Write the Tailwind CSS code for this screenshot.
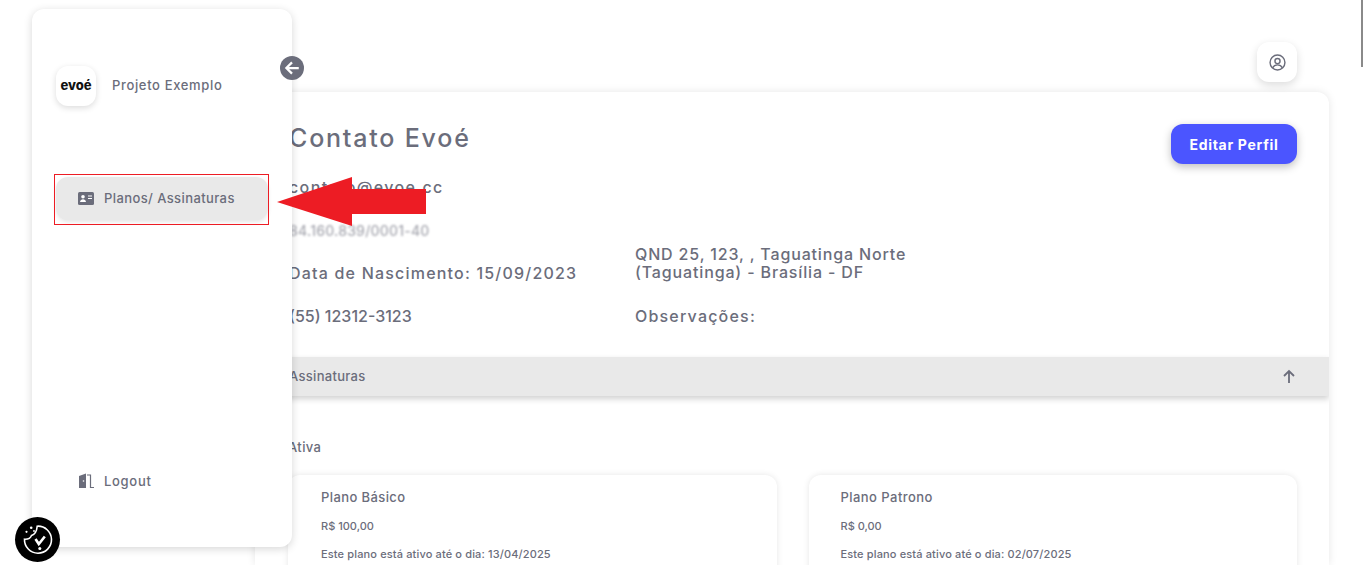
<!DOCTYPE html>
<html lang="pt-BR">
<head>
  <meta charset="UTF-8" />
  <meta name="viewport" content="width=device-width, initial-scale=1.0" />
  <title>Perfil - Evoé</title>
  <script src="https://cdn.jsdelivr.net/npm/@tailwindcss/browser@4"></script>
</head>
<body class="bg-white h-[565px] overflow-hidden relative font-['Inter',sans-serif] font-medium text-[#6b6d7b]">

  <!-- conteudo -->
  <main class="ml-[255px] w-[1074px]">
    <div class="h-[92px] flex justify-end items-start pt-[42px] pr-[32px]">
      <button class="w-10 h-10 bg-white rounded-xl shadow-[0_3px_8px_rgba(0,0,0,0.14)] flex items-center justify-center">
        <svg class="w-[17px] h-[17px]" viewBox="0 0 24 24" fill="none" stroke="#6b6d7b" stroke-width="2">
          <circle cx="12" cy="12" r="10.500" />
          <circle cx="12" cy="10" r="3.600" />
          <path d="M5 19.500c1.500-3 4-4.200 7-4.200s5.500 1.200 7 4.200" />
        </svg>
      </button>
    </div>

    <section class="bg-white rounded-t-xl shadow-[0_0_8px_rgba(0,0,0,0.1)] h-[473px] overflow-hidden">
      <div class="pl-[34px] pr-[32px] h-[265px] relative">
        <div class="flex justify-between pt-[32px]">
          <h1 class="text-[25px] leading-[28px] tracking-[1.8px]">Contato Evoé</h1>
          <button class="w-[126px] h-10 bg-[#4b55ff] rounded-xl text-white font-bold text-[14px] tracking-[0.7px] shadow-[0_3px_8px_rgba(0,0,0,0.25)]">Editar Perfil</button>
        </div>
        <div class="grid grid-cols-[346px_300px] text-[16px] leading-[18px]">
          <div class="mt-[14px]">
            <p class="tracking-[1.370px]">contato@evoe.cc</p>
            <p class="mt-[26px] text-[14px] tracking-[0.2px] blur-[1px] opacity-60 whitespace-nowrap">84.160.839/0001-40</p>
            <p class="mt-[24px] tracking-[1.200px]">Data de Nascimento: 15/09/2023</p>
            <p class="mt-[25px]">(55) 12312-3123</p>
          </div>
          <div class="pt-[81px]">
            <p class="tracking-[0.850px]">QND 25, 123, , Taguatinga Norte (Taguatinga) - Brasília - DF</p>
            <p class="mt-[26px] tracking-[1.200px]">Observações:</p>
          </div>
        </div>
      </div>

      <div class="h-[39px] pt-px bg-[#e9e9e9] shadow-[0_3px_6px_rgba(0,0,0,0.18)] flex items-center justify-between pl-[34px] pr-[32px] relative text-[13px] tracking-[0.3px]">
        <span>Assinaturas</span>
        <svg class="w-4 h-4" viewBox="0 0 16 16" fill="none" stroke="#6b6d7b" stroke-width="1.800">
          <path d="M8 14V2.500M3 7l5-5 5 5" />
        </svg>
      </div>

      <div class="pl-[33px] pr-[32px]">
        <p class="pt-[43px] text-[13px] leading-[16px] tracking-[0.4px]">Ativa</p>
        <div class="grid grid-cols-2 gap-x-[32px] mt-[20px]">
          <article class="h-[120px] rounded-xl shadow-[0_0_6px_rgba(0,0,0,0.1)] pl-[33px] pt-[14px]">
            <h2 class="text-[13px] leading-[16px] tracking-[0.4px]">Plano Básico</h2>
            <p class="text-[11px] leading-[14px] mt-[14px]">R$ 100,00</p>
            <p class="text-[11px] leading-[14px] mt-[14px] tracking-[0.14px]">Este plano está ativo até o dia: 13/04/2025</p>
          </article>
          <article class="h-[120px] rounded-xl shadow-[0_0_6px_rgba(0,0,0,0.1)] pl-[32px] pt-[14px]">
            <h2 class="text-[13px] leading-[16px] tracking-[0.45px]">Plano Patrono</h2>
            <p class="text-[11px] leading-[14px] mt-[14px]">R$ 0,00</p>
            <p class="text-[11px] leading-[14px] mt-[14px] tracking-[0.14px]">Este plano está ativo até o dia: 02/07/2025</p>
          </article>
        </div>
      </div>
    </section>
  </main>

  <!-- menu lateral, sobre o conteudo -->
  <aside class="absolute left-[32px] top-[9px] w-[260px] h-[538px] bg-white rounded-xl shadow-[0_2px_8px_rgba(0,0,0,0.16)] px-6 flex flex-col">
    <div class="flex items-center gap-4 mt-[57px]">
      <div class="w-10 h-10 rounded-xl bg-white shadow-[0_2px_6px_rgba(0,0,0,0.14)] flex items-center justify-center text-[#111] font-extrabold text-[13px]">evoé</div>
      <span class="text-[13px] tracking-[0.65px]">Projeto Exemplo</span>
    </div>
    <a class="mt-[71px] h-[43px] rounded-xl bg-[#e9e9e9] shadow-[0_2px_4px_rgba(0,0,0,0.1)] flex items-center pl-[22px] gap-[10px] text-[13px] tracking-[0.4px] w-[212px]">
      <svg class="w-4 h-[13px]" viewBox="0 0 16 13">
        <rect width="16" height="13" rx="1.500" fill="#6b6d7b" />
        <circle cx="5" cy="4.800" r="1.800" fill="#fff" />
        <path d="M2 10c.3-2 1.500-2.800 3-2.800s2.700.8 3 2.800z" fill="#fff" />
        <path d="M10 4h4M10 6.500h4" stroke="#fff" />
      </svg>
      Planos/ Assinaturas
    </a>
    <a class="mt-auto mb-[56px] flex items-center pl-[22px] gap-[10px] text-[13px] tracking-[0.7px]">
      <svg class="w-4 h-4" viewBox="0 0 16 16" fill="#6b6d7b">
        <path d="M1 15V3l7-2.500V15z" />
        <circle cx="5.500" cy="8" r="0.800" fill="#fff" />
        <path d="M9 2h3.500V14.500H16" fill="none" stroke="#6b6d7b" stroke-width="1.200" />
      </svg>
      Logout
    </a>
  </aside>

  <button class="absolute left-[280px] top-[56px] w-6 h-6 rounded-full bg-[#6b6d7b] flex items-center justify-center">
    <svg class="w-[18px] h-[18px]" viewBox="0 0 16 16" fill="none" stroke="#fff" stroke-width="2">
      <path d="M14 8H3M8 3L3 8l5 5" />
    </svg>
  </button>

  <!-- anotacao em vermelho -->
  <div class="absolute left-[54px] top-[174px] w-[215px] h-[51px] border border-[#ed1c24]"></div>
  <svg class="absolute left-[277px] top-[177px]" width="149" height="49" viewBox="0 0 149 49">
    <polygon points="0,25 75,0 75,12 149,12 149,37 75,37 75,49" fill="#ed1c24" />
  </svg>

  <!-- selo de cookies -->
  <div class="absolute left-[15px] top-[517px] w-[45px] h-[45px] rounded-full bg-black flex items-center justify-center">
    <svg class="w-[32px] h-[32px]" viewBox="0 0 32 32" fill="none" stroke="#fff" stroke-width="1.600">
      <path d="M15.200 2.200A13.500 13.500 0 1 1 2.500 15.200Q8 15.500 9.500 11.500Q14.500 10 15.200 2.200z" />
      <path d="M13.500 15l3.300 5 6-7.500" stroke-width="2.600" />
      <circle cx="17.800" cy="24.500" r="1.500" fill="#fff" stroke="none" />
      <circle cx="9.200" cy="3.800" r="1.300" fill="#fff" stroke="none" />
      <circle cx="4.500" cy="7.800" r="1.100" fill="#fff" stroke="none" />
      <circle cx="12" cy="7" r="0.900" fill="#fff" stroke="none" />
    </svg>
  </div>

  <!-- barra de rolagem -->
  <div class="absolute right-[2px] top-0 w-[2px] h-[67px] bg-[#8a8a8a]"></div>
</body>
</html>
